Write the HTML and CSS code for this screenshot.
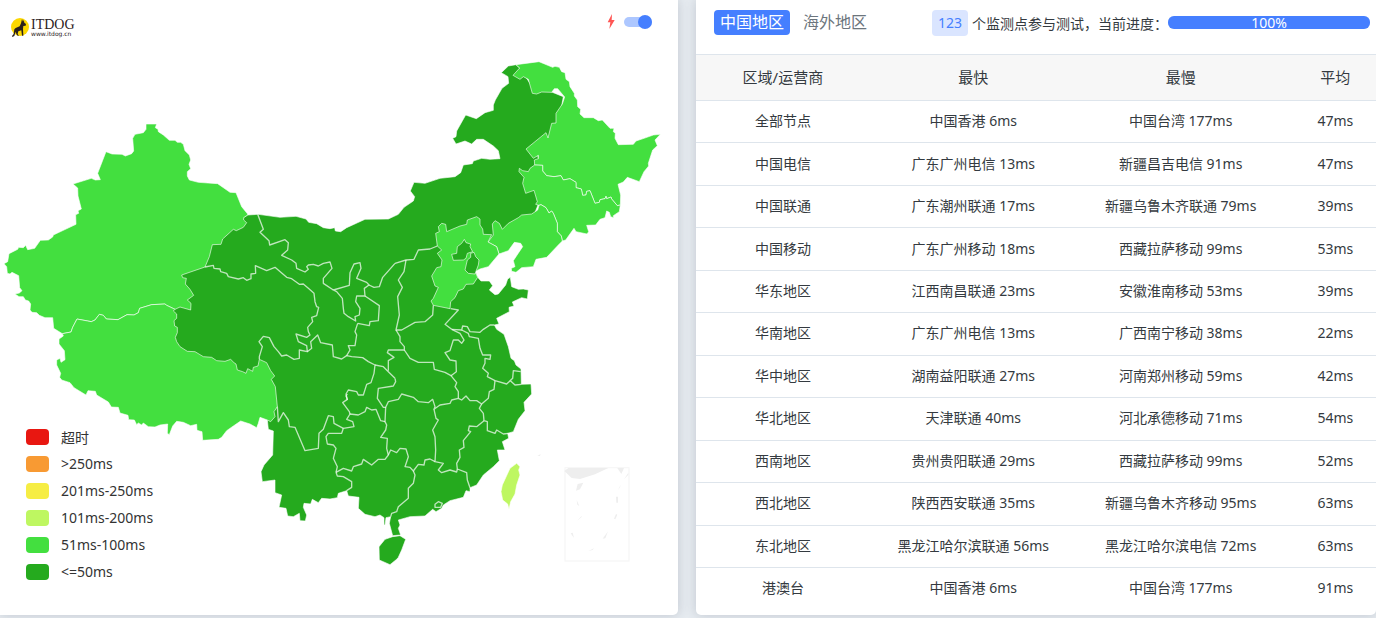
FILE: index.html
```html
<!DOCTYPE html>
<html lang="zh-CN">
<head>
    <meta charset="UTF-8">
    <meta name="viewport" content="width=device-width, initial-scale=1.0">
    <title>ITDOG</title>
    <link rel="stylesheet" href="styles.css">
</head>
<body>
    <main class="page">
        <section class="card map-card">
            <svg class="map" viewBox="0 0 2034 1845" role="img" aria-label="中国地区">
                <!-- mainland -->
                <path class="p50" d="M743,645 775,643 840,652 888,649 918,657 926,667 950,671 970,683 990,686 1004,683 1006,693 1022,695 1040,683 1095,658 1165,657 1195,643 1212,622 1240,603 1244,590 1231,573 1242,547 1275,550 1320,535 1365,530 1382,518 1390,495 1417,491 1420,483 1445,475 1470,478 1500,476 1495,452 1480,438 1450,418 1430,418 1415,432 1395,423 1368,432 1358,415 1368,410 1370,393 1397,345 1429,356 1455,338 1480,331 1480,315 1486,300 1506,265 1526,250 1524,230 1504,218 1525,198 1548,194 1559,204 1590,250 1690,290 1670,400 1610,450 1620,500 1620,600 1600,650 1510,700 1480,740 1450,790 1425,810 1433,832 1443,843 1468,843 1478,857 1468,870 1485,884 1495,882 1517,855 1523,837 1531,832 1535,860 1555,868 1570,867 1585,870 1582,897 1565,893 1537,906 1542,918 1527,922 1528,935 1490,955 1497,972 1483,975 1490,988 1512,1003 1525,1040 1533,1075 1543,1082 1548,1095 1563,1107 1564,1153 1593,1152 1595,1182 1572,1207 1575,1232 1555,1258 1540,1295 1523,1300 1526,1315 1507,1325 1515,1350 1492,1350 1498,1382 1480,1400 1450,1425 1430,1455 1410,1463 1410,1475 1398,1472 1390,1492 1350,1502 1330,1515 1325,1525 1308,1535 1298,1528 1275,1548 1230,1550 1195,1560 1200,1575 1195,1585 1202,1605 1178,1607 1168,1570 1172,1550 1158,1553 1155,1575 1152,1575 1152,1553 1140,1545 1125,1550 1095,1543 1075,1525 1077,1492 1045,1488 1040,1472 1015,1480 1012,1493 990,1497 965,1495 955,1508 937,1498 932,1512 912,1510 910,1522 920,1545 916,1563 900,1562 898,1540 880,1550 863,1548 858,1525 837,1522 845,1485 825,1478 825,1440 787,1445 783,1415 792,1395 818,1365 820,1293 805,1288 802,1260 790,1200 760,1130 600,1100 500,1040 500,940 540,910 550,860 530,820 600,790 630,720 700,670Z"/>
                <!-- Xinjiang, Tibet -->
                <path class="p100" d="M743,642 725,620 712,588 708,578 690,577 653,551 595,547 568,540 562,528 562,515 572,506 567,493 572,480 568,465 555,452 550,433 542,427 532,427 525,421 508,421 490,405 475,395 474,388 466,383 470,372 438,372 438,388 430,398 405,403 398,415 401,453 395,461 376,468 366,463 336,462 318,455 293,520 301,539 286,540 274,535 219,552 233,564 234,588 244,627 234,632 236,640 227,644 228,673 160,705 158,711 145,720 121,721 104,745 83,749 77,736 70,743 56,742 53,748 27,761 23,785 12,791 20,800 22,820 30,822 36,817 56,827 59,863 66,872 58,879 45,882 57,890 70,890 76,900 86,903 92,912 90,930 96,937 110,938 118,946 135,953 158,953 161,985 187,1001 213,996 218,982 231,957 274,965 285,960 298,943 310,946 319,957 354,959 381,944 402,945 415,938 419,925 455,914 495,912 500,916 525,928 540,921 572,930 573,910 562,900 581,886 570,868 556,852 559,835 548,833 545,825 615,801 628,770 637,734 663,733 668,717 700,688 709,692 730,682 740,668 731,660 731,653 743,645Z"/>
                <path class="p100" d="M187,1001 213,996 218,982 231,957 274,965 285,960 298,943 310,946 319,957 354,959 381,944 402,945 415,938 419,925 455,914 495,912 500,916 525,928 520,933 530,942 530,955 522,962 524,978 532,982 532,998 526,1012 530,1025 540,1040 562,1054 585,1055 610,1070 635,1072 650,1082 675,1084 692,1078 702,1088 708,1092 712,1110 728,1115 738,1120 743,1106 758,1114 760,1102 774,1098 778,1078 800,1088 812,1112 824,1128 814,1138 826,1160 830,1200 832,1220 822,1235 825,1250 812,1265 802,1260 780,1252 775,1270 770,1283 750,1272 722,1263 700,1278 680,1292 665,1312 655,1318 608,1321 606,1295 591,1291 590,1273 572,1277 550,1267 530,1264 518,1278 508,1304 502,1300 503,1272 480,1275 465,1281 445,1280 430,1269 425,1275 415,1269 410,1274 403,1260 386,1259 384,1246 360,1239 355,1222 334,1221 325,1206 290,1185 286,1174 264,1172 258,1185 222,1163 210,1148 185,1140 179,1132 182,1120 170,1095 170,1080 180,1075 183,1087 195,1079 193,1052 177,1032 177,1017 190,1008Z"/>
                <!-- Heilongjiang, Jilin, Liaoning, Hebei -->
                <path class="p100" d="M1548,194 1617,185 1658,202 1665,199 1678,202 1685,215 1695,218 1698,238 1708,245 1710,260 1723,280 1723,288 1732,300 1733,320 1742,328 1740,342 1752,353 1780,353 1795,362 1807,360 1830,385 1842,385 1840,395 1846,400 1845,415 1855,434 1900,433 1908,423 1932,415 1960,405 1981,403 1965,420 1972,437 1958,450 1945,490 1946,498 1932,515 1918,545 1882,532 1870,546 1854,553 1862,585 1861,615 1852,617 1835,597 1833,591 1820,596 1818,589 1815,596 1800,599 1798,607 1785,610 1770,572 1760,574 1758,585 1748,586 1744,567 1728,563 1728,547 1710,536 1690,540 1683,527 1662,530 1640,527 1628,513 1628,496 1604,495 1603,480 1615,476 1615,466 1600,475 1578,447 1638,398 1644,414 1655,370 1668,369 1668,340 1687,312 1694,291 1673,266 1663,266 1655,277 1625,276 1610,282 1597,280 1585,238 1570,230 1560,238 1539,226 1559,204Z"/>
                <path class="p100" d="M1604,495 1628,496 1628,513 1640,527 1662,530 1683,527 1690,540 1710,536 1728,547 1728,563 1744,567 1748,586 1758,585 1760,574 1770,572 1785,610 1798,607 1800,599 1815,596 1818,589 1820,596 1833,591 1835,597 1852,617 1861,615 1858,635 1840,647 1841,653 1832,650 1828,637 1820,633 1815,653 1800,658 1787,675 1760,676 1766,695 1761,702 1728,695 1722,685 1697,720 1687,723 1684,708 1672,695 1672,670 1660,640 1655,633 1647,639 1638,623 1623,614 1617,616 1607,613 1612,605 1602,571 1577,580 1568,550 1572,532 1557,515 1558,505 1568,512 1585,515 1590,505Z"/>
                <path class="p100" d="M1617,616 1623,614 1638,623 1647,639 1655,633 1660,640 1672,670 1672,695 1684,708 1687,723 1675,735 1640,772 1608,778 1600,800 1565,803 1548,817 1535,814 1534,805 1545,800 1540,782 1568,740 1562,730 1543,727 1525,752 1497,762 1490,740 1464,726 1480,705 1477,672 1485,662 1498,670 1507,688 1525,670 1555,653 1565,645 1595,642 1613,630Z"/>
                <path class="p100" d="M1497,762 1465,800 1440,807 1425,815 1433,832 1420,852 1398,853 1390,867 1375,872 1365,893 1352,905 1350,926 1300,916 1293,903 1300,895 1315,862 1305,858 1295,828 1310,803 1323,800 1326,780 1312,760 1325,750 1312,738 1307,700 1318,695 1315,680 1325,670 1337,673 1340,695 1380,678 1400,673 1402,660 1430,650 1440,657 1440,675 1448,687 1450,703 1475,704 1464,726 1490,740Z"/>
                <!-- Beijing, Tianjin -->
                <g class="p50" transform="translate(1140 600)">
                    <path d="M253,118 258,128 272,132 270,140 278,155 262,160 258,175 250,180 220,181 215,163 230,160 232,140 245,130Z"/>
                    <path d="M282,157 287,170 297,180 295,195 285,222 265,220 255,210 262,180 272,172 272,160Z"/>
                </g>
                <!-- Hainan, Taiwan -->
                <g transform="translate(750 1110)">
                    <path class="p50" d="M428,500 450,497 467,508 455,540 445,562 440,568 420,584 388,570 387,530 405,508Z"/>
                    <path class="p200" d="M800,280 810,290 806,300 810,315 800,345 795,372 782,395 777,418 773,402 758,390 753,365 757,345 780,295Z"/>
                </g>
                <!-- north-west borders -->
                <g class="border" transform="translate(510 600)">
                    <path d="M263,43 280,88 270,97 297,122 299,135 345,119 355,128 353,150 335,166 365,180 378,190 380,205 405,216 415,208 410,200 415,195 430,193 445,198 460,190 480,186 486,205 460,235 460,250 490,270"/>
                    <path d="M105,201 130,196 132,205 150,207 152,215 170,220 175,230 205,237 220,233 230,241 243,236 243,222 257,220 256,197 290,212 315,202 350,232 365,236 388,253 400,252 415,265 432,280 435,305 440,320 446,322 440,347 425,352 428,365 413,382 415,395 420,405 410,412 378,402 385,425 410,437 412,455 388,450 388,475 372,478 350,465 335,468 325,455 312,440 298,413 280,409 267,425 277,440 268,470 268,478"/>
                    <path d="M412,455 425,445 422,425 443,405 452,428 487,435 490,470 515,477 530,467 545,470 578,473 595,485 615,495 612,520 603,548 590,553 580,585 565,585 560,575 535,570 528,582 532,600"/>
                    <path d="M530,467 540,450 535,437 555,437 560,405 555,395 563,370"/>
                    <path d="M490,270 538,256 540,218 552,192 570,188 573,205 560,235 590,247 597,255 583,265 585,288 560,288 557,305 570,325 568,345 555,350 557,363 535,350 522,340 520,325 517,295 500,275Z"/>
                    <path d="M585,288 628,317 625,362 600,365 598,377 563,370"/>
                    <path d="M597,255 612,262 628,260 638,232 675,190"/>
                    <path d="M615,495 640,500 655,515 675,535"/>
                </g>
                <!-- north and east borders -->
                <g class="border" transform="translate(1140 600)">
                    <path d="M45,190 78,180 102,178 115,150 150,147 172,138"/>
                    <path d="M78,180 72,215 55,240 67,262 53,290 58,345 48,390 65,390 105,367 135,365 158,345 160,316"/>
                    <path d="M48,390 60,410 60,425 73,440 73,450 25,450 22,458 42,472 25,482 25,512"/>
                    <path d="M73,450 90,475 115,487 160,487 163,508 195,517 213,527 229,515 228,483 210,480 195,458 210,452 220,420 235,420 245,430 252,420 240,400 215,388"/>
                    <path d="M215,388 195,373 235,330 212,326"/>
                    <path d="M215,388 245,390 248,378 262,380 270,395 300,397 310,388 330,375 343,375"/>
                    <path d="M245,390 265,400 268,410 295,415 300,445 308,465 332,465 330,478 315,475 315,490 308,505 325,520 322,530 345,542 380,552 398,535 400,512 422,515M392,543 405,555 424,553"/>
                </g>
                <!-- southern borders -->
                <g class="border" transform="translate(750 1110)">
                    <path d="M603,17 620,38 615,50 625,65 625,85"/>
                    <path d="M435,25 437,35 430,48 385,55 382,85 400,112 407,112 415,95 445,88 455,72 490,82 505,95 535,98 548,88 555,110 552,118 570,105 600,100 605,90 625,85 635,90 648,78 660,92 680,92 695,102 715,85 718,65 732,58 735,32"/>
                    <path d="M695,102 688,115 700,130 702,152 712,155 712,182 735,190 740,180 760,192 775,190"/>
                    <path d="M702,152 680,170 658,168 655,182 662,185 640,212 642,232 628,240 630,262 620,280 622,297 650,308 652,330 660,353"/>
                    <path d="M552,118 558,145 565,150 548,180 555,200 557,240 555,275 580,280 565,300 575,308 600,300 620,306 622,297"/>
                    <path d="M555,275 540,267 525,270 522,285 505,283 490,303 480,292 465,290 475,260 468,237 450,235 440,248 422,240 415,255"/>
                    <path d="M407,112 405,155 410,165 407,180 392,202 412,205 410,235 415,255 405,268 385,268 365,285 340,268 335,282 310,290 305,303 280,295 258,307"/>
                    <path d="M258,307 262,290 250,265 258,235 250,225 232,222 228,200 235,190 275,190 280,175 312,170 308,155 290,148 300,132 325,135 345,125 350,112 365,120 378,118 392,152 405,155"/>
                    <path d="M292,72 288,78 292,88 278,98 298,125 300,132"/>
                    <path d="M82,110 85,155 100,128 115,150 118,170 135,172 165,242 205,235 207,190 220,178 235,137 250,140 252,160 280,175"/>
                    <path d="M258,307 262,318 280,320 305,335 305,352 290,362"/>
                    <path d="M490,303 495,315 490,340 475,355 475,385 445,410 440,425 425,430 422,440"/>
                    <path d="M565,395 577,400 572,412 555,412 555,403Z"/>
                </g>
                <!-- South China Sea inset -->
                <g transform="translate(1440 1320)">
                    <path class="inset" d="M255,83H447V363H255Z"/>
                    <path class="isles" d="M253,93 265,84H385L345,103 300,117 275,114ZM412,84H432L424,102ZM293,132 310,128 300,148 288,152ZM432,118 445,98 445,104ZM408,170H414V188H409ZM402,236 408,222 412,224 406,238ZM368,296 384,274 376,295ZM272,280 278,278 282,294ZM290,180 298,198 292,194ZM292,242 305,227 304,232ZM414,150 422,134 420,142ZM325,333 342,325 338,330Z"/>
                    <path class="isles" d="M172,48 182,42 180,48Z"/>
                </g>
            </svg>
            <header class="map-head">
                <a class="logo" href="#" aria-label="ITDOG">
                    <svg width="18" height="20" viewBox="0 0 54 60" aria-hidden="true">
                        <circle cx="27" cy="27" r="27" fill="#fcd800"/>
                        <path fill="#2b211b" d="M33,3 36,11 38,5 40,14 45,18 44,23 37,24 36,33 37,53 33,53 31,37 22,40 20,48 24,53 20,53 16,48 14,41 10,54 4,57 3,54 8,48 10,34 14,30 26,25 30,16Z"/>
                    </svg>
                    <span class="logo-text">
                        <span class="logo-name">ITDOG</span>
                        <span class="logo-url">www.itdog.cn</span>
                    </span>
                </a>
                <label class="fast" for="fast">
                    <svg width="8" height="15" viewBox="0 0 24 45" aria-hidden="true">
                        <path fill="#ff5654" d="M15,0 2,25H10L7,45 23,18H14Z"/>
                    </svg>
                    <input class="switch" type="checkbox" id="fast" aria-label="加速" checked>
                </label>
            </header>
            <ul class="legend">
                <li><span class="swatch timeout"></span>超时</li>
                <li><span class="swatch over250"></span>&gt;250ms</li>
                <li><span class="swatch to250"></span>201ms-250ms</li>
                <li><span class="swatch to200"></span>101ms-200ms</li>
                <li><span class="swatch to100"></span>51ms-100ms</li>
                <li><span class="swatch to50"></span>&lt;=50ms</li>
            </ul>
        </section>

        <section class="card result-card">
            <div class="result-head">
                <button class="tab active" type="button">中国地区</button>
                <button class="tab" type="button">海外地区</button>
                <span class="count">123</span>
                <span class="status">个监测点参与测试，当前进度：</span>
                <div class="progress" role="progressbar" aria-valuenow="100" aria-valuemin="0" aria-valuemax="100">
                    <div class="progress-bar" style="width: 100%">100%</div>
                </div>
            </div>
            <table class="result">
                <thead>
                    <tr><th class="area">区域/运营商</th><th class="fastest">最快</th><th class="slowest">最慢</th><th>平均</th></tr>
                </thead>
                <tbody>
                    <tr><td>全部节点</td><td>中国香港 6ms</td><td>中国台湾 177ms</td><td>47ms</td></tr>
                    <tr><td>中国电信</td><td>广东广州电信 13ms</td><td>新疆昌吉电信 91ms</td><td>47ms</td></tr>
                    <tr><td>中国联通</td><td>广东潮州联通 17ms</td><td>新疆乌鲁木齐联通 79ms</td><td>39ms</td></tr>
                    <tr><td>中国移动</td><td>广东广州移动 18ms</td><td>西藏拉萨移动 99ms</td><td>53ms</td></tr>
                    <tr><td>华东地区</td><td>江西南昌联通 23ms</td><td>安徽淮南移动 53ms</td><td>39ms</td></tr>
                    <tr><td>华南地区</td><td>广东广州电信 13ms</td><td>广西南宁移动 38ms</td><td>22ms</td></tr>
                    <tr><td>华中地区</td><td>湖南益阳联通 27ms</td><td>河南郑州移动 59ms</td><td>42ms</td></tr>
                    <tr><td>华北地区</td><td>天津联通 40ms</td><td>河北承德移动 71ms</td><td>54ms</td></tr>
                    <tr><td>西南地区</td><td>贵州贵阳联通 29ms</td><td>西藏拉萨移动 99ms</td><td>52ms</td></tr>
                    <tr><td>西北地区</td><td>陕西西安联通 35ms</td><td>新疆乌鲁木齐移动 95ms</td><td>63ms</td></tr>
                    <tr><td>东北地区</td><td>黑龙江哈尔滨联通 56ms</td><td>黑龙江哈尔滨电信 72ms</td><td>63ms</td></tr>
                    <tr><td>港澳台</td><td>中国香港 6ms</td><td>中国台湾 177ms</td><td>91ms</td></tr>
                </tbody>
            </table>
        </section>
    </main>
</body>
</html>
```

FILE: styles.css
```css
* {
    box-sizing: border-box;
}
body {
    margin: 0;
    background-color: #e6ebf0;
    color: #343a40;
    font-family: "Noto Sans", "Noto Sans CJK SC", sans-serif;
    font-size: 14px;
}
.page {
    display: grid;
    grid-template-columns: 678fr 680fr;
    gap: 18px;
    padding-bottom: 3px;
}
.card {
    background-color: white;
    border-radius: 0 0 5px 5px;
    box-shadow: 0 0 12px rgba(50, 60, 80, 0.2);
}

/* map: header and legend share one grid cell with the drawing */
.map-card {
    display: grid;
    border-bottom-left-radius: 0;
}
.map-card > * {
    grid-area: 1 / 1;
}
.map {
    display: block;
    width: 100%;
    height: auto;
}
.map path {
    stroke-linejoin: round;
}
.p50, .p100, .p200 {
    stroke: rgba(255, 255, 255, 0.6);
    stroke-width: 3;
}
.p50 {
    fill: #25aa1e;
}
.p100 {
    fill: #43df3f;
}
.p200 {
    fill: #bef761;
}
.border {
    fill: none;
    stroke: rgba(255, 255, 255, 0.7);
    stroke-width: 4;
}
.inset {
    fill: none;
    stroke: #f7f7f7;
    stroke-width: 4;
}
.isles {
    fill: #eeeeee;
}
.map-head {
    display: flex;
    justify-content: space-between;
    align-items: flex-start;
    align-self: start;
    padding: 14px 26px 0 11px;
}
.logo {
    display: flex;
    gap: 2px;
    padding-top: 4px;
    color: #2b211b;
    text-decoration: none;
}
.logo-text {
    display: flex;
    flex-direction: column;
}
.logo-name {
    font-family: "Liberation Serif", serif;
    font-size: 14px;
    line-height: 14px;
}
.logo-url {
    font-family: "DejaVu Sans", sans-serif;
    font-size: 6px;
    line-height: 4px;
}
.fast {
    display: flex;
    align-items: center;
    gap: 9px;
    cursor: pointer;
}
.switch {
    appearance: none;
    display: flex;
    align-items: center;
    width: 28px;
    height: 10px;
    margin: 0;
    border-radius: 5px;
    background-color: #adc7ff;
    cursor: pointer;
}
.switch::before {
    content: "";
    width: 14px;
    height: 14px;
    border-radius: 50%;
    background-color: #457fff;
}
.switch:checked::before {
    margin-left: auto;
}
.legend {
    align-self: end;
    justify-self: start;
    margin: 0;
    padding: 0 0 30px 26px;
    list-style: none;
    color: #333;
}
.legend li {
    display: flex;
    align-items: center;
    gap: 12px;
    height: 27px;
}
.swatch {
    width: 23px;
    height: 16px;
    border-radius: 4px;
}
.timeout {
    background-color: #e81711;
}
.over250 {
    background-color: #f89a33;
}
.to250 {
    background-color: #f6ed44;
}
.to200 {
    background-color: #bef761;
}
.to100 {
    background-color: #43df3f;
}
.to50 {
    background-color: #25aa1e;
}

/* results */
.result-card {
    display: flex;
    flex-direction: column;
    padding-bottom: 5px;
}
.result-head {
    display: flex;
    align-items: center;
    height: 54px;
    padding: 0 6px 9px 18px;
}
.tab {
    height: 25px;
    margin-right: 7px;
    padding: 0 6px;
    border: none;
    border-radius: 4px;
    background: none;
    color: #6c757d;
    font-family: inherit;
    font-size: 16px;
    line-height: 25px;
    white-space: nowrap;
    cursor: pointer;
}
.tab.active {
    background-color: #457fff;
    color: white;
}
.count {
    margin-left: 52px;
    margin-right: 4px;
    padding: 0 6px;
    border-radius: 4px;
    background-color: #dae5ff;
    color: #457fff;
    line-height: 26px;
}
.status {
    white-space: nowrap;
}
.progress {
    flex: 1;
    height: 13px;
    border-radius: 6px;
    background-color: #e9ecef;
}
.progress-bar {
    border-radius: 6px;
    background-color: #457fff;
    color: white;
    line-height: 13px;
    text-align: center;
}
.result {
    flex: 1;
    width: 100%;
    table-layout: fixed;
    border-collapse: collapse;
    text-align: center;
}
.result th {
    height: 46px;
    padding: 0 3px 2px 0;
    border-top: 1px solid #dee5ec;
    background-color: #f7f7f7;
    font-size: 15px;
    font-weight: normal;
}
.result td {
    height: 42px;
    padding: 0 3px 1px 0;
    border-top: 1px solid #dee5ec;
    line-height: 20px;
}
.area {
    width: 26%;
}
.fastest {
    width: 30%;
}
.slowest {
    width: 31%;
}
.result th:last-child,
.result td:last-child {
    padding-left: 10px;
}
```
